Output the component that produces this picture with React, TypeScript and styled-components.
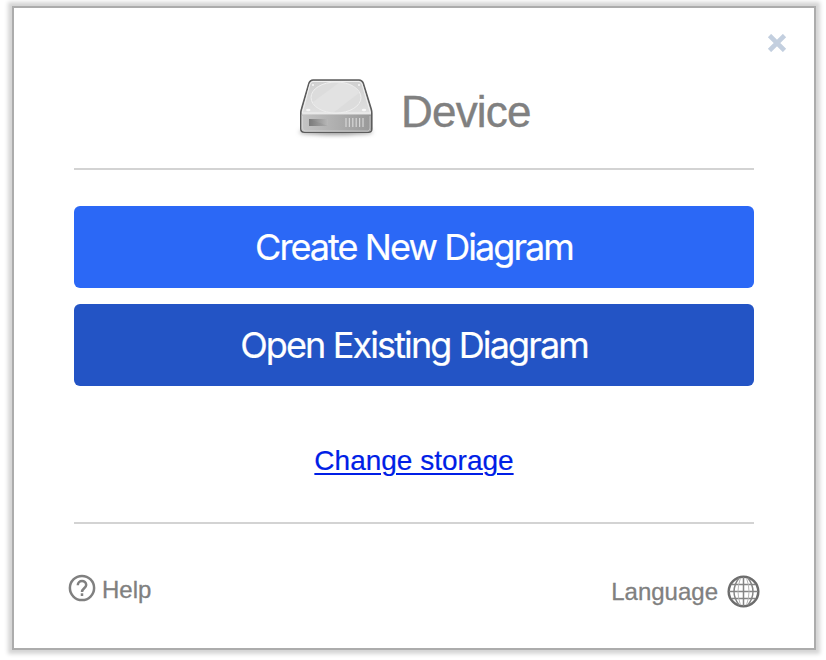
import React from 'react';
import styled, { createGlobalStyle } from 'styled-components';

const GlobalStyle = createGlobalStyle`
  * { box-sizing: border-box; }
  body { margin: 0; background: #fff; font-family: "Liberation Sans", Arial, sans-serif; }
  button { font: inherit; border: 0; padding: 0; background: none; color: inherit; cursor: pointer; }
`;

const Page = styled.div`
  width: 826px;
  height: 660px;
  padding: 6px 10px 10px 12px;
  overflow: hidden;
`;

const Dialog = styled.main`
  position: relative;
  width: 804px;
  height: 644px;
  padding: 0 60px;
  display: flex;
  flex-direction: column;
  background: #fff;
  border: 2px solid #acacac;
  box-shadow: 0 0 4px 4px #d5d5d5;
`;

const CloseButton = styled.button`
  position: absolute;
  top: 26px;
  right: 27px;
  width: 20px;
  height: 18px;
  svg { display: block; }
`;

const Header = styled.header`
  height: 162px;
  padding: 66px 0 0 221px;
  display: flex;
  align-items: flex-start;
  gap: 24px;
  border-bottom: 2px solid #d3d3d3;
`;

const Title = styled.h1`
  margin: 13px 0 0;
  font-size: 44px;
  line-height: 50px;
  font-weight: 400;
  letter-spacing: -0.8px;
  color: #808080;
  -webkit-text-stroke: 0.4px #808080;
`;

const Actions = styled.div`
  margin-top: 36px;
  display: flex;
  flex-direction: column;
  gap: 16px;
`;

const ActionButton = styled.button<{ $color: string; $spacing: number }>`
  height: 82px;
  border-radius: 6px;
  background: ${(p) => p.$color};
  color: #fff;
  font-family: Inter, sans-serif;
  font-size: 36px;
  line-height: 82px;
  letter-spacing: ${(p) => p.$spacing}px;
  text-align: center;
  -webkit-text-stroke: 0.2px #fff;
`;

const StorageLink = styled.a`
  align-self: center;
  margin-top: 59px;
  font-size: 28px;
  line-height: 32px;
  color: #001ee6;
  text-decoration: underline;
  text-decoration-thickness: 2px;
  text-underline-offset: 3px;
  -webkit-text-stroke: 0.2px #001ee6;
`;

const Footer = styled.footer`
  margin-top: 45px;
  padding-top: 50px;
  display: flex;
  justify-content: space-between;
  border-top: 2px solid #d3d3d3;
  color: #808080;
  font-size: 24px;
  line-height: 28px;
  -webkit-text-stroke: 0.3px #808080;
`;

const HelpLink = styled.div`
  display: flex;
  gap: 6px;
  margin-left: -6px;
  span { padding-top: 2px; }
`;

const LanguageLink = styled.div`
  display: flex;
  gap: 9px;
  margin-right: -7px;
  span { padding-top: 4px; }
`;

const DriveIcon = () => (
  <svg width="82" height="66" viewBox="0 0 82 66">
    <defs>
      <linearGradient id="top" x2="0" y2="1">
        <stop stopColor="#cfcfcf" />
        <stop offset="1" stopColor="#e9e9e9" />
      </linearGradient>
      <linearGradient id="front" x2="1" y2="0">
        <stop stopColor="#c4c4c4" />
        <stop offset="1" stopColor="#999" />
      </linearGradient>
      <linearGradient id="slot" x2="1" y2="0">
        <stop stopColor="#7c7c7c" />
        <stop offset="1" stopColor="#b8b8b8" />
      </linearGradient>
      <filter id="soft" x="-20%" y="-100%" width="140%" height="300%">
        <feGaussianBlur stdDeviation="2" />
      </filter>
    </defs>
    <ellipse cx="41" cy="58" rx="37" ry="3" fill="#999" filter="url(#soft)" />
    <path d="M18 6h46q3 0 4.200 3l8 26q.6 2 .6 4v16q0 3.300-3.500 3.300h-64Q5.800 58.300 5.800 55V39q0-2 .7-4L14 9q1.200-3 4-3Z" fill="url(#top)" stroke="#5c5c5c" strokeWidth="1.600" />
    <path d="M6.600 40.500H76v14q0 3-3 3H9.600q-3 0-3-3Z" fill="url(#front)" />
    <path d="M18 7.500h46q2 0 3 2.500l8.400 29H7.300L15 10q1-2.500 3-2.500Z" fill="none" stroke="#f1f1f1" strokeWidth="1" />
    <ellipse cx="41" cy="23.500" rx="25" ry="15.500" fill="#dcdcdc" stroke="#efefef" strokeWidth="1" />
    <path d="M18 28 45 8q13-.5 19 11L38 39q-16-1-20-11Z" fill="#e8e8e8" opacity=".45" />
    <g fill="#f7f7f7"><ellipse cx="13.300" cy="36" rx="2.200" ry="1.300" /><ellipse cx="69" cy="36" rx="2.200" ry="1.300" /><circle cx="18" cy="11" r="1" /><circle cx="64" cy="11" r="1" /></g>
    <path d="M14 45h19v7H14Z" fill="url(#slot)" />
    <path d="M14 45v7h19Z" fill="#707070" opacity=".15" />
    <path d="M51 44v9m3.400-9v9m3.400-9v9m3.400-9v9m3.400-9v9m3.400-9v9" stroke="#d6d6d6" strokeWidth="1.200" />
    <path d="M7.500 42v12q0 3 3 3h62q2.500 0 2.500-3V42" fill="none" stroke="#ddd" opacity=".6" />
  </svg>
);

const HelpIcon = () => (
  <svg width="28" height="28" viewBox="0 0 28 28" fill="none" stroke="#808080" strokeWidth="2.500">
    <circle cx="14" cy="14" r="12.100" />
    <path d="M9.800 11.300c0-5.800 8.400-5.500 8.400-.4 0 3.200-4.200 3.500-4.200 7" />
    <path d="M14 19.300V22" />
  </svg>
);

const GlobeIcon = () => (
  <svg width="34" height="34" viewBox="0 0 34 34" fill="none" stroke="#858585" strokeWidth="1.500">
    <circle cx="16.500" cy="17.500" r="14.800" stroke="#6c6c6c" strokeWidth="2.500" />
    <path d="M16.500 3v29M2 17.500h29M5 10.500h23M5 24.500h23" />
    <path d="M12 4Q2 17.500 12 31M21 4q10 13.500 0 27" />
    <path d="M13.500 4q-5 13.500 0 27M19.500 4q5 13.500 0 27" stroke="#b8b8b8" strokeWidth="1" />
  </svg>
);

export default function App() {
  return (
    <Page>
      <GlobalStyle />
      <Dialog>
        <CloseButton aria-label="Close">
          <svg width="20" height="18" viewBox="0 0 20 18"><path d="m2.500 1.500 15 15m0-15-15 15" stroke="#c3cfdf" strokeWidth="4.600" /></svg>
        </CloseButton>
        <Header><DriveIcon /><Title>Device</Title></Header>
        <Actions>
          <ActionButton $color="#2b68f6" $spacing={-1.93}>Create New Diagram</ActionButton>
          <ActionButton $color="#2354c5" $spacing={-1.88}>Open Existing Diagram</ActionButton>
        </Actions>
        <StorageLink>Change storage</StorageLink>
        <Footer>
          <HelpLink><HelpIcon /><span>Help</span></HelpLink>
          <LanguageLink><span>Language</span><GlobeIcon /></LanguageLink>
        </Footer>
      </Dialog>
    </Page>
  );
}
